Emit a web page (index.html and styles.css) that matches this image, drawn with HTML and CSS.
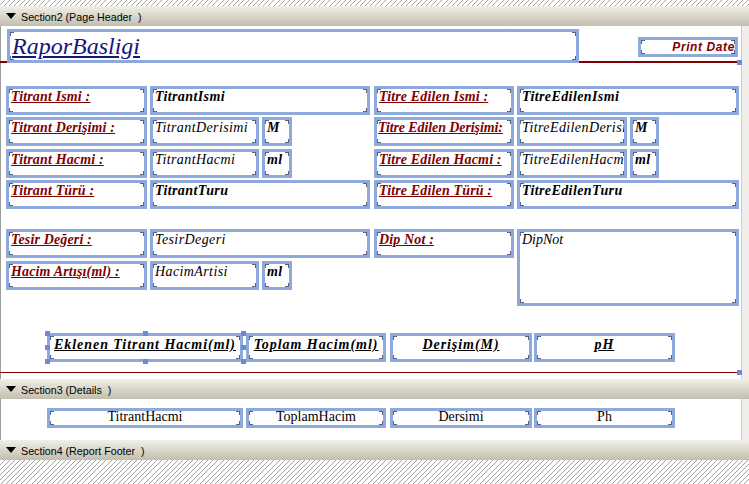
FILE: index.html
```html
<!DOCTYPE html>
<html>
    <head>
        <title>Rapor Tasarimi</title>
        <link rel="stylesheet" href="styles.css">
    </head>
    <body>
        <div class="designer">
            <div class="hatch top"></div>

            <div class="band-bar">
                <svg class="arrow" width="10" height="6" viewBox="0 0 10 6"><polygon points="0,0 10,0 5,6" fill="#000"/></svg>
                <span>Section2 (Page Header&nbsp; )</span>
            </div>
            <div class="band-body">
                <div class="canvas page-header">
                    <div class="rule thick"></div>
                    <div class="handle h-rule1"></div>
                    <div class="ctl title"><span>RaporBasligi</span></div>
                    <div class="ctl print-date">Print Date</div>

                    <div class="ctl lab l-lab r1"><span>Titrant Ismi :</span></div>
                    <div class="ctl val bold l-val r1">TitrantIsmi</div>
                    <div class="ctl lab r-lab r1"><span>Titre Edilen Ismi :</span></div>
                    <div class="ctl val bold r-val r1">TitreEdilenIsmi</div>

                    <div class="ctl lab l-lab r2"><span>Titrant Derişimi :</span></div>
                    <div class="ctl val l-short r2">TitrantDerisimi</div>
                    <div class="ctl val bold l-unit r2">M</div>
                    <div class="ctl lab tight r-lab r2"><span>Titre Edilen Derişimi:</span></div>
                    <div class="ctl val r-short r2">TitreEdilenDerisimi</div>
                    <div class="ctl val bold r-unit r2">M</div>

                    <div class="ctl lab l-lab r3"><span>Titrant Hacmi :</span></div>
                    <div class="ctl val l-short r3">TitrantHacmi</div>
                    <div class="ctl val bold l-unit r3">ml</div>
                    <div class="ctl lab r-lab r3"><span>Titre Edilen Hacmi :</span></div>
                    <div class="ctl val r-short r3">TitreEdilenHacmi</div>
                    <div class="ctl val bold r-unit r3">ml</div>

                    <div class="ctl lab l-lab r4"><span>Titrant Türü :</span></div>
                    <div class="ctl val bold l-val r4">TitrantTuru</div>
                    <div class="ctl lab r-lab r4"><span>Titre Edilen Türü :</span></div>
                    <div class="ctl val bold r-val r4">TitreEdilenTuru</div>

                    <div class="ctl lab l-lab r5"><span>Tesir Değeri :</span></div>
                    <div class="ctl val l-val r5">TesirDegeri</div>
                    <div class="ctl lab r-lab r5"><span>Dip Not :</span></div>
                    <div class="ctl val plain r-val r5 tall">DipNot</div>

                    <div class="ctl lab l-lab r6"><span>Hacim Artışı(ml) :</span></div>
                    <div class="ctl val l-short r6">HacimArtisi</div>
                    <div class="ctl val bold l-unit r6">ml</div>

                    <div class="ctl head c1"><span>Eklenen Titrant Hacmi(ml)</span></div>
                    <div class="ctl head c2"><span>Toplam Hacim(ml)</span></div>
                    <div class="ctl head c3"><span>Derişim(M)</span></div>
                    <div class="ctl head c4"><span>pH</span></div>

                    <div class="handle s1"></div>
                    <div class="handle s2"></div>
                    <div class="handle s3"></div>
                    <div class="handle s4"></div>
                    <div class="handle s5"></div>
                    <div class="handle s6"></div>
                    <div class="handle s7"></div>
                    <div class="handle s8"></div>

                    <div class="rule thin"></div>
                    <div class="handle h-rule2"></div>
                </div>
                <div class="gutter"></div>
            </div>

            <div class="band-bar">
                <svg class="arrow" width="10" height="6" viewBox="0 0 10 6"><polygon points="0,0 10,0 5,6" fill="#000"/></svg>
                <span>Section3 (Details&nbsp; )</span>
            </div>
            <div class="band-body">
                <div class="canvas details">
                    <div class="ctl cell c1">TitrantHacmi</div>
                    <div class="ctl cell c2">ToplamHacim</div>
                    <div class="ctl cell c3">Dersimi</div>
                    <div class="ctl cell c4">Ph</div>
                </div>
                <div class="gutter"></div>
            </div>

            <div class="band-bar">
                <svg class="arrow" width="10" height="6" viewBox="0 0 10 6"><polygon points="0,0 10,0 5,6" fill="#000"/></svg>
                <span>Section4 (Report Footer&nbsp; )</span>
            </div>
            <div class="hatch bottom"></div>
        </div>
    </body>
</html>
```

FILE: styles.css
```css
* {
    box-sizing: border-box;
}

body {
    margin: 0;
    background: #fff;
    font-family: 'Liberation Serif', 'Times New Roman', serif;
}

.designer {
    width: 749px;
    height: 484px;
    overflow: hidden;
    display: flex;
    flex-direction: column;
}

.hatch {
    background: repeating-linear-gradient(135deg, #fff 0 2.9px, #a2a2a2 2.9px 3.6px);
}

.hatch.top {
    height: 6px;
}

.hatch.bottom {
    flex: 1;
}

.band-bar {
    height: 20px;
    display: flex;
    align-items: center;
    gap: 5px;
    padding-left: 6px;
    background: linear-gradient(#f1f0e8, #dcd9cd 45%, #c2beaf);
    font-family: 'Liberation Sans', Arial, sans-serif;
    font-size: 10.7px;
    color: #000;
}

.band-bar span {
    padding-top: 1px;
}

.band-body {
    display: flex;
}

.canvas {
    position: relative;
    flex: 1;
    background: #fff;
    border-left: 1px solid #9c9c9c;
}

.page-header {
    height: 353px;
}

.details {
    height: 41px;
}

.gutter {
    width: 8px;
    background: #efeeea;
    border-left: 1px solid #cfcdc4;
}

/* controls */
.ctl {
    position: absolute;
    height: 29px;
    border: 3px solid #8ea9db;
    overflow: hidden;
    white-space: nowrap;
    padding: 1px 2px 0;
    background:
        linear-gradient(#4f6690, #4f6690) left top / 4px 1px no-repeat,
        linear-gradient(#4f6690, #4f6690) left top / 1px 4px no-repeat,
        linear-gradient(#4f6690, #4f6690) right top / 4px 1px no-repeat,
        linear-gradient(#4f6690, #4f6690) right top / 1px 4px no-repeat,
        linear-gradient(#4f6690, #4f6690) left bottom / 4px 1px no-repeat,
        linear-gradient(#4f6690, #4f6690) left bottom / 1px 4px no-repeat,
        linear-gradient(#4f6690, #4f6690) right bottom / 4px 1px no-repeat,
        linear-gradient(#4f6690, #4f6690) right bottom / 1px 4px no-repeat,
        #fff;
}

.title {
    left: 6px;
    top: 3px;
    width: 572px;
    height: 34px;
    padding: 0 2px;
    font-size: 24px;
    line-height: 28px;
    font-style: italic;
    color: #15157a;
    text-decoration: underline;
}

.print-date {
    left: 637px;
    top: 11px;
    width: 100px;
    height: 20px;
    padding: 0;
    text-align: right;
    font-family: 'Liberation Sans', Arial, sans-serif;
    font-size: 12px;
    line-height: 14px;
    font-weight: bold;
    font-style: italic;
    letter-spacing: 0.6px;
    color: #800000;
}

.lab {
    font-size: 14px;
    line-height: 13px;
    font-weight: bold;
    font-style: italic;
    letter-spacing: 0.15px;
    color: #800000;
    text-decoration: underline;
}

.lab.tight {
    padding-left: 1px;
    letter-spacing: -0.1px;
}

.val {
    font-size: 14px;
    line-height: 13px;
    font-style: italic;
    letter-spacing: 0.4px;
    color: #000;
}

.val.bold {
    font-weight: bold;
}

.val.plain {
    letter-spacing: 0;
}

.l-lab { left: 5px; width: 141px; }
.l-val { left: 149px; width: 220px; }
.l-short { left: 149px; width: 109px; }
.l-unit { left: 261px; width: 30px; }
.r-lab { left: 373px; width: 140px; }
.r-val { left: 516px; width: 222px; }
.r-short { left: 516px; width: 110px; }
.r-unit { left: 629px; width: 29px; }

.r1 { top: 60px; }
.r2 { top: 91px; }
.r3 { top: 123px; }
.r4 { top: 154px; }
.r5 { top: 203px; }
.r6 { top: 235px; }

.tall {
    height: 77px;
}

.c1 { left: 46px; width: 196px; }
.c2 { left: 245px; width: 140px; }
.c3 { left: 389px; width: 142px; }
.c4 { left: 533px; width: 141px; }

.head {
    top: 307px;
    padding: 0 2px;
    text-align: center;
    font-size: 14px;
    line-height: 17px;
    font-weight: bold;
    font-style: italic;
    letter-spacing: 0.95px;
    text-decoration: underline;
    color: #000;
}

.cell {
    top: 9px;
    height: 20px;
    padding: 0 2px;
    text-align: center;
    font-size: 14px;
    line-height: 12px;
    color: #000;
}

/* lines and selection handles */
.rule {
    position: absolute;
    left: -1px;
    width: 738px;
    background: #800000;
}

.rule.thick {
    top: 35px;
    height: 2px;
}

.rule.thin {
    top: 346px;
    height: 1px;
}

.handle {
    position: absolute;
    width: 5px;
    height: 5px;
    background: #6a8cd0;
}

.h-rule1 { left: 736px; top: 34px; }
.h-rule2 { left: 736px; top: 344px; }

.s1 { left: 44px; top: 305px; }
.s2 { left: 142px; top: 305px; }
.s3 { left: 240px; top: 305px; }
.s4 { left: 44px; top: 319px; }
.s5 { left: 240px; top: 319px; }
.s6 { left: 44px; top: 333px; }
.s7 { left: 142px; top: 333px; }
.s8 { left: 240px; top: 333px; }
```
